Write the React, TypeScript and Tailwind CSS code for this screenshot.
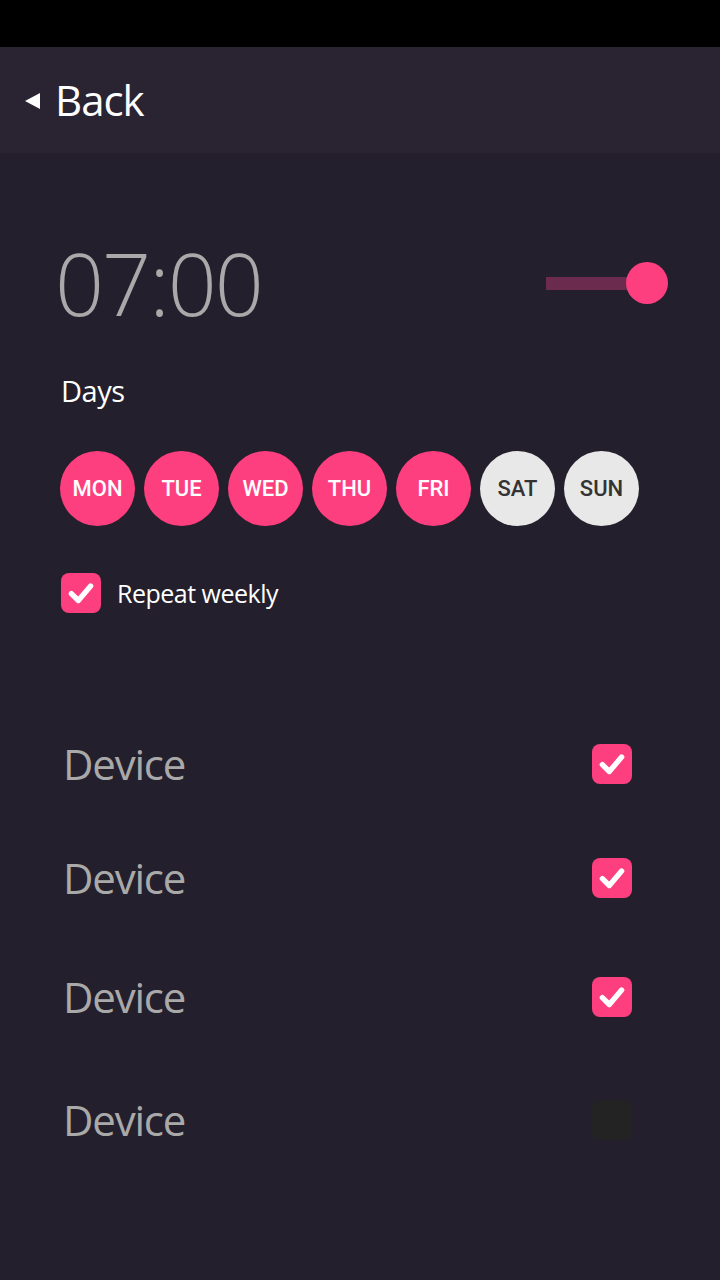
import React from "react";

const Check = ({ on }: { on: boolean }) => (
  <div
    className={`w-[40px] h-[40px] rounded-[8px] flex items-center justify-center ${on ? "bg-[#fd3f7f]" : "bg-[#232323]"}`}
  >
    {on && (
      <svg width="30" height="30" viewBox="0 0 28 28">
        <path d="M5 14.5 L11.5 21 L23 7.5" fill="none" stroke="#fff" strokeWidth="5" strokeLinecap="round" strokeLinejoin="round" />
      </svg>
    )}
  </div>
);

const days = [
  { l: "MON", on: true },
  { l: "TUE", on: true },
  { l: "WED", on: true },
  { l: "THU", on: true },
  { l: "FRI", on: true },
  { l: "SAT", on: false },
  { l: "SUN", on: false },
];

const devices = [
  { on: true, mt: "mt-[0px]" },
  { on: true, mt: "mt-[72px]" },
  { on: true, mt: "mt-[77px]" },
  { on: false, mt: "mt-[81px]" },
];

export default function App() {
  return (
    <div
      className="w-[720px] h-[1280px] bg-[#241f2c] flex flex-col"
      style={{ fontFamily: "'Open Sans', 'Noto Sans', sans-serif" }}
    >
      <div className="h-[47px] bg-black" />
      <div className="h-[106px] bg-[#2a2332] flex items-center pl-[25px]">
        <svg width="15" height="16" viewBox="0 0 15 16" className="mt-[1px]">
          <path d="M0 8 L15 0 L15 16 Z" fill="#fff" />
        </svg>
        <span className="ml-[15px] text-white text-[42px] tracking-[-1px] leading-none">Back</span>
      </div>

      <div className="flex items-center justify-between pl-[55px] pr-[52px] mt-[87px]">
        <span className="text-[#a9a9a9] text-[86px] font-light leading-none tracking-[-2px]">07:00</span>
        <div className="flex items-center">
          <div className="w-[82px] h-[13px] bg-[#6a2b4f]" />
          <div className="w-[42px] h-[42px] rounded-full bg-[#fd3f7f] -ml-[2px]" />
        </div>
      </div>

      <div className="pl-[61px] mt-[50px] text-white text-[29px] leading-none tracking-[-0.5px]">Days</div>

      <div className="flex gap-[9px] pl-[60px] mt-[46px]">
        {days.map((d) => (
          <div
            key={d.l}
            className={`w-[75px] h-[75px] rounded-full flex items-center justify-center text-[22px] font-medium ${d.on ? "bg-[#fd3f7f] text-white" : "bg-[#e8e8e8] text-[#333]"}`}
            style={{ fontFamily: "Roboto, sans-serif" }}
          >
            {d.l}
          </div>
        ))}
      </div>

      <div className="flex items-center pl-[61px] mt-[47px]">
        <Check on={true} />
        <span className="ml-[16px] text-white text-[25px] tracking-[-0.5px] leading-none">Repeat weekly</span>
      </div>

      <div className="flex flex-col pl-[63px] pr-[88px] mt-[130px]">
        {devices.map((d, i) => (
          <div key={i} className={`flex items-center justify-between ${d.mt}`}>
            <span className="text-[#a9a9a9] text-[42px] tracking-[-1.2px] leading-none">Device</span>
            <Check on={d.on} />
          </div>
        ))}
      </div>
    </div>
  );
}
